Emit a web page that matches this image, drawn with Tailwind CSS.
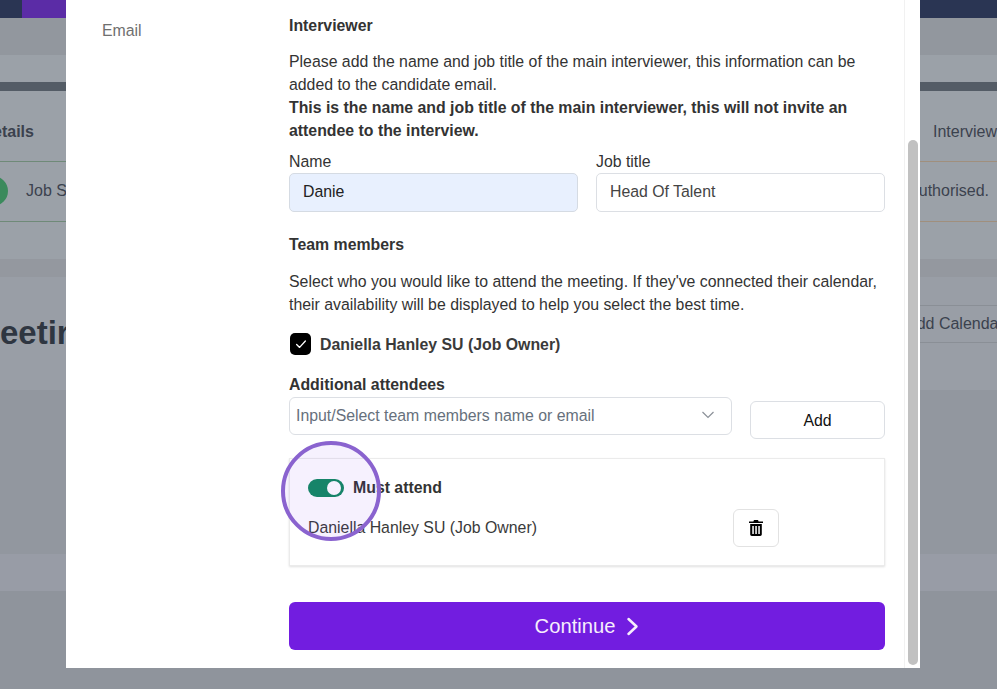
<!DOCTYPE html>
<html lang="en">

<head>
    <meta charset="UTF-8" />
    <meta name="viewport" content="width=device-width, initial-scale=1" />
    <title>Interview details</title>
    <script src="https://cdn.jsdelivr.net/npm/@tailwindcss/browser@4"></script>
</head>

<body class="relative w-[997px] h-[689px] overflow-hidden bg-[#8f949c] font-['Liberation_Sans',Arial,sans-serif] text-[#2b2f36]">
    <!-- page behind the modal -->
    <div class="flex flex-col w-full h-full text-[#3b424e]">
        <div class="h-[18px] shrink-0 bg-[#2a3553] flex">
            <div class="w-[22px] bg-[#2a3553]"></div>
            <div class="w-[44px] bg-[#5b2ca6]"></div>
        </div>
        <div class="h-[37px] shrink-0 bg-[#92979e]"></div>
        <div class="h-[27px] shrink-0 bg-[#9ba1a8]"></div>
        <div class="h-[9px] shrink-0 bg-[#545c66]"></div>
        <div class="h-[70px] shrink-0 bg-[#9ba1a8] flex items-center justify-between pt-[11px] text-[16px]">
            <span class="font-bold -ml-[7px]">etails</span>
            <span>Interview</span>
        </div>
        <div class="h-[61px] shrink-0 bg-[#9ba1a8] flex justify-between text-[16px]">
            <div class="w-[100px] border-y border-y-[#6f8a78] flex items-center gap-[18px] pb-[1px]">
                <span class="block w-[30px] h-[30px] -ml-[22px] rounded-full bg-[#3b8a5c]"></span>
                <span class="whitespace-nowrap">Job S</span>
            </div>
            <div class="w-[100px] border-y border-y-[#a08f7d] flex items-center justify-end pb-[1px] pr-[8px]">uthorised.</div>
        </div>
        <div class="h-[37px] shrink-0 bg-[#9ba1a8]"></div>
        <div class="h-[18px] shrink-0 bg-[#94989f]"></div>
        <div class="h-[113px] shrink-0 bg-[#999ea6] flex justify-between">
            <span class="text-[33px] font-bold leading-none mt-[39px] text-[#2f3641]">eetir</span>
            <span class="self-start mt-[28px] w-[91px] h-[38px] border-y border-y-[#8a8f96] text-[16px] leading-[36px] whitespace-nowrap overflow-hidden">Add Calendar</span>
        </div>
        <div class="h-[164px] shrink-0 bg-[#92979f]"></div>
        <div class="h-[37px] shrink-0 bg-[#989ca6]"></div>
        <div class="flex-1 bg-[#8f949c]"></div>
    </div>

    <!-- modal -->
    <div class="absolute left-[66px] top-0 w-[854px] h-[668px] bg-white flex">
        <div class="w-[223px] shrink-0 pl-[36px] pt-[22px] text-[15.85px] leading-[18px] text-[#6f6f6f]">Email</div>

        <div class="w-[596px] shrink-0 pt-[17px] text-[15.85px] leading-[23px] text-[#333333]">
            <h3 class="font-bold leading-[18px]">Interviewer</h3>
            <p class="mt-[15px]">Please add the name and job title of the main interviewer, this information can be added to the candidate email.</p>
            <p class="font-bold">This is the name and job title of the main interviewer, this will not invite an attendee to the interview.</p>

            <div class="mt-[10px] grid grid-cols-2 gap-x-[18px]">
                <div>
                    <label class="block leading-[20px]">Name</label>
                    <div class="h-[39px] mt-[1px] rounded-[5px] border border-[#d5dbe3] bg-[#e8f0fe] pl-[13px] leading-[36px] text-[#222222]">Danie</div>
                </div>
                <div>
                    <label class="block leading-[20px]">Job title</label>
                    <div class="h-[39px] mt-[1px] rounded-[5px] border border-[#dcdfe4] bg-white pl-[13px] leading-[36px] text-[#444444]">Head Of Talent</div>
                </div>
            </div>

            <h3 class="mt-[24px] font-bold leading-[18px]">Team members</h3>
            <p class="mt-[16px]">Select who you would like to attend the meeting. If they've connected their calendar, their availability will be displayed to help you select the best time.</p>

            <div class="mt-[16px] flex items-center gap-[9px] h-[24px] font-bold text-[#3a3a3a]">
                <span class="flex items-center justify-center w-[21px] h-[22px] ml-[1px] rounded-[5px] bg-black">
                    <svg class="w-[14px] h-[14px]" viewBox="0 0 16 16" fill="none" stroke="#fff" stroke-width="1.5" stroke-linecap="round" stroke-linejoin="round"><path d="M3 8.5l3.4 3.4L13 4.6" /></svg>
                </span>
                Daniella Hanley SU (Job Owner)
            </div>

            <div class="mt-[19px] font-bold text-[#333333] leading-[20px]">Additional attendees</div>
            <div class="flex items-start gap-[18px] mt-[2px]">
                <div class="relative w-[443px] h-[38px] rounded-[6px] border border-[#dcdfe4] pl-[6px] leading-[36px] text-[#66707c]">
                    Input/Select team members name or email
                    <svg class="absolute right-[16px] top-[12px] w-[14px] h-[10px]" viewBox="0 0 14 10" fill="none" stroke="#8b9098" stroke-width="1.2"><path d="M1.5 2l5.5 5.500L12.500 2" /></svg>
                </div>
                <button class="w-[135px] h-[38px] mt-[4px] rounded-[6px] border border-[#dcdfe4] text-center text-[#111111]">Add</button>
            </div>

            <div class="mt-[19px] w-[596px] h-[108px] border border-[#ebebeb] shadow-[0_1px_2px_rgba(0,0,0,0.12)] pl-[18px] pr-[105px] pt-[19px]">
                <div class="flex items-center gap-[9px] font-bold leading-[20px] text-[#333333]">
                    <span class="flex justify-end items-center w-[36px] h-[18px] rounded-full bg-[#0f8a5f] pr-[3px]">
                        <span class="block w-[14px] h-[14px] rounded-full bg-white"></span>
                    </span>
                    Must attend
                </div>
                <div class="flex items-center justify-between mt-[11px]">
                    <span class="leading-[38px] text-[#3a3a3a]">Daniella Hanley SU (Job Owner)</span>
                    <button class="flex items-center justify-center w-[46px] h-[38px] rounded-[6px] border border-[#e2e2e2]">
                        <svg class="w-[14px] h-[16px]" viewBox="0 0 14 16" fill="#000"><path d="M5 0h4l.6 1.400H14v1.600H0V1.400h4.400zM1.200 4h11.600v10.300c0 .9-.7 1.700-1.600 1.700H2.800c-.9 0-1.600-.8-1.600-1.700zM3.300 6v8h1.500V6zm3 0v8h1.500V6zm3 0v8h1.500V6z" /></svg>
                    </button>
                </div>
            </div>

            <button class="mt-[36px] flex items-center justify-center gap-[11px] w-[596px] h-[48px] rounded-[6px] bg-[#721de0] text-[20.2px] text-[#f6eefc]">
                Continue
                <svg class="w-[13px] h-[19px]" viewBox="0 0 13 19" fill="none" stroke="#f6eefc" stroke-width="2.500" stroke-linecap="round" stroke-linejoin="round"><path d="M2.500 2l8 7.500-8 7.500" /></svg>
            </button>
        </div>

        <!-- scrollbar -->
        <div class="ml-[19px] w-[16px] h-full border-l border-l-[#f1f1f1] flex flex-col items-center">
            <div class="w-[10px] h-[525px] mt-[140px] rounded-full bg-[#c1c1c1]"></div>
        </div>
    </div>

    <!-- highlight ring on the toggle -->
    <div class="absolute left-[281px] top-[441px] w-[100px] h-[100px] rounded-full border-[4px] border-[#8a63cf] bg-[#7c3aed]/[0.07]"></div>
</body>

</html>
